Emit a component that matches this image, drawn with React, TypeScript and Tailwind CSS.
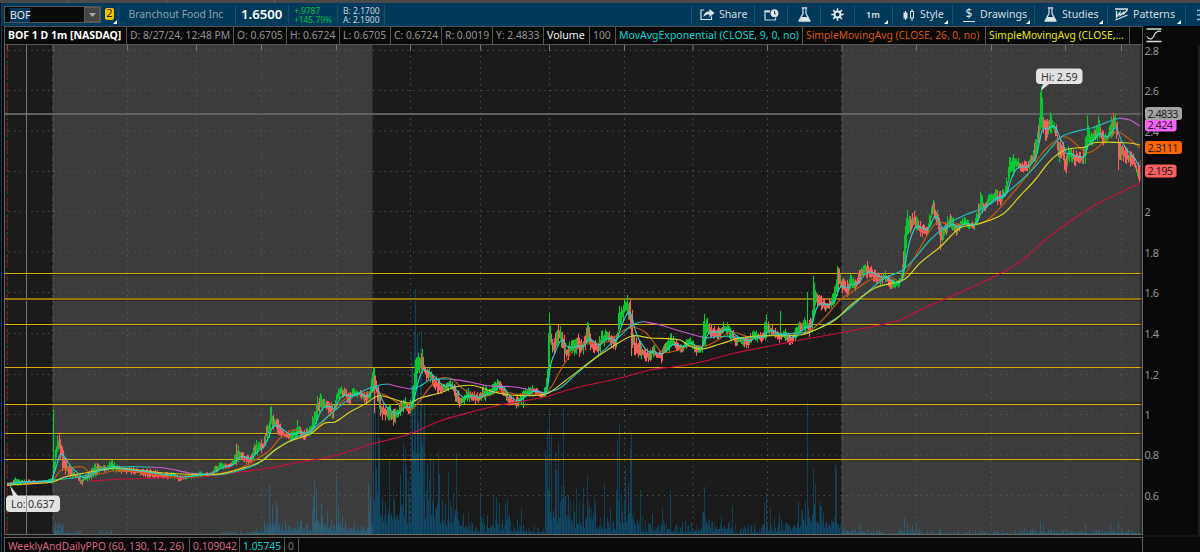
import type { ReactNode } from "react";

type Pt = [number, number];
type Candle = [number, number, number, 0 | 1];

/* x, high, low, direction (1 = up, 0 = down) */
const CANDLES: Candle[] = [
  [7,483,486,0],[12,482,485,0],[16,477,484,1],[20,480,484,1],[30,480,483,0],[40,481,483,0],[52,479,483,1],
  [53,410,482,1],[54,455,478,1],[56,440,463,1],[58,437,450,1],[60,433,455,0],[62,445,467,0],[66,460,473,0],
  [70,466,478,0],[74,472,476,1],[79,476,480,0],[81,478,485,0],[84,476,481,1],[90,471,478,1],[98,461,472,1],
  [101,466,471,1],[106,466,470,1],[111,460,468,1],[116,465,471,1],[120,467,472,0],[140,468,474,0],[152,470,477,0],[165,473,478,0],
  [172,472,477,1],[178,476,480,0],[190,474,478,1],[200,472,476,1],[210,473,475,0],[215,466,473,1],[220,463,468,1],
  [230,464,467,0],[234,456,466,1],[236,446,462,1],[239,448,459,1],[242,453,459,0],[249,457,464,0],[252,452,460,1],[255,442,455,1],
  [259,441,451,1],[263,441,450,0],[266,425,440,1],[269,420,435,1],[270,407,430,1],[272,412,426,1],[274,415,427,0],
  [278,422,435,0],[284,431,437,0],[290,432,440,0],[295,430,437,1],[297,420,436,1],[300,428,436,0],[304,431,438,0],
  [310,427,434,1],[314,410,428,1],[317,399,417,1],[321,394,408,1],[324,400,409,1],[328,400,411,0],[333,407,418,0],
  [336,390,406,1],[340,384,397,1],[345,390,398,0],[349,392,404,0],[353,389,396,1],[358,390,396,1],[362,392,398,0],
  [366,395,403,0],[369,388,401,1],[371,377,391,1],[374,370,388,1],[375,374,390,0],[377,384,402,0],[381,402,417,0],
  [385,406,418,0],[389,406,418,1],[393,411,423,0],[397,409,419,1],[401,402,412,1],[404,397,409,1],[408,404,412,0],
  [411,400,411,1],[413,378,403,1],[415,364,392,1],[416,355,385,1],[419,356,370,1],[422,350,370,1],[424,361,376,0],
  [427,370,380,0],[430,369,380,1],[434,376,386,0],[440,382,395,0],[446,384,390,1],[449,378,389,1],[453,384,393,0],
  [456,389,402,0],[460,395,406,0],[464,394,404,1],[467,389,399,1],[473,392,401,0],[478,394,403,0],[483,387,400,1],
  [490,390,396,1],[494,381,394,1],[498,380,387,1],[502,384,392,0],[505,390,398,0],[508,396,405,0],[515,399,407,0],
  [520,395,404,1],[525,389,396,1],[532,386,393,1],[537,388,394,0],[541,391,400,0],[545,388,396,1],[547,372,391,1],
  [548,340,385,1],[549,313,362,1],[550,316,352,1],[552,338,350,0],[554,340,352,0],[556,330,347,1],[560,325,340,1],
  [563,333,353,0],[566,346,360,0],[571,342,353,1],[575,341,353,1],[577,333,350,1],[580,343,356,0],[584,335,350,1],
  [587,322,341,1],[590,333,347,0],[594,341,351,0],[597,343,354,0],[601,333,348,1],[606,330,341,1],[611,334,345,0],
  [615,338,348,0],[617,328,342,1],[619,304,330,1],[621,309,322,1],[624,301,316,1],[627,297,312,1],[630,302,325,0],
  [632,315,350,0],[634,338,352,0],[640,343,356,0],[645,350,359,0],[649,350,360,0],[653,345,355,1],[657,351,359,0],
  [661,350,361,0],[664,343,354,1],[668,339,350,1],[671,335,347,1],[676,341,348,0],[681,344,354,0],[686,340,347,1],
  [690,337,345,1],[695,345,354,0],[701,344,352,1],[704,315,345,1],[708,320,334,1],[712,327,336,0],[718,328,337,0],
  [723,323,333,1],[728,324,334,1],[734,333,344,0],[740,337,343,1],[747,338,347,0],[754,331,340,1],[762,334,341,0],
  [765,320,337,1],[768,323,333,1],[774,328,337,0],[779,334,341,0],[784,329,338,1],[790,336,344,0],[796,328,338,1],
  [801,320,332,1],[805,319,330,1],[810,320,335,0],[812,308,328,1],[814,280,310,1],[816,288,303,1],[818,292,305,0],
  [822,299,309,0],[828,301,310,0],[833,294,304,1],[836,278,296,1],[838,266,288,1],[840,276,288,0],[846,284,296,0],
  [851,274,288,1],[856,280,289,0],[861,266,281,1],[864,264,273,1],[867,263,276,0],[873,270,279,0],[880,275,284,0],
  [885,272,280,1],[890,279,287,0],[895,282,288,1],[901,275,283,1],[903,240,280,1],[906,215,250,1],[908,213,235,1],
  [911,216,228,0],[915,212,228,1],[919,222,234,0],[926,228,236,0],[930,212,227,1],[932,200,215,1],[936,208,222,0],
  [940,225,246,0],[943,230,240,1],[947,218,230,1],[951,215,226,1],[956,225,236,0],[962,217,227,1],[968,221,227,1],
  [973,223,230,0],[977,211,222,1],[980,194,211,1],[984,202,211,0],[989,195,203,1],[994,190,200,1],[999,193,204,0],
  [1004,190,199,1],[1007,175,197,1],[1009,155,180,1],[1012,156,175,1],[1016,158,167,1],[1021,161,172,0],
  [1026,163,173,0],[1031,156,165,1],[1035,142,160,1],[1038,118,144,1],[1040,100,133,1],[1041,92,130,1],
  [1043,112,130,1],[1045,118,137,0],[1048,123,138,0],[1050,114,130,1],[1053,122,131,1],[1056,126,136,0],
  [1058,135,158,0],[1062,140,160,0],[1064,150,171,0],[1066,158,174,0],[1068,145,160,1],[1071,150,159,1],
  [1075,152,164,0],[1082,154,162,0],[1085,140,160,1],[1087,119,142,1],[1090,132,145,1],[1094,128,142,1],
  [1098,119,137,1],[1102,132,144,0],[1107,136,140,1],[1110,123,137,1],[1112,115,133,1],[1115,116,130,1],
  [1117,120,140,0],[1118,130,169,0],[1119,138,156,0],[1123,146,159,0],[1128,151,163,0],[1134,156,167,0],
  [1137,165,179,0],[1141,162,181,0],
];

/* Isolated long wicks: x, high, low, direction */
const WICKS: Candle[] = [
  [53,410,482,1],[236,445,462,1],[238,446,460,1],[270,407,430,1],[297,420,436,1],[373,368,392,1],[374,376,413,0],[422,349,372,1],
  [523,398,408,1],[549,313,362,1],[564,340,362,0],[587,322,345,1],[631,320,356,0],[704,314,345,1],[707,318,332,1],
  [766,314,338,1],[780,311,338,1],[790,338,345,0],[807,292,325,1],[809,320,337,0],[813,276,310,1],[837,266,292,1],
  [1040,92,130,1],[1087,118,150,1],[1118,138,170,0],[1139,165,182,0],
];

const ORANGE: Pt[] = [[9,485],[52,481],[60,471],[70,468],[83,467],[90,473],[100,474],[112,471],[128,471],[150,474],[176,477],[195,475],[215,474],[235,470],[250,463],[270,450],[280,438],[290,431],[297,430],[307,433],[320,425],[330,414],[340,403],[350,396],[360,394],[372,392],[385,395],[395,401],[410,410],[418,403],[430,387],[440,378.5],[452,379],[462,388],[475,396],[487,396],[500,391],[515,394],[530,394],[545,393],[552,386],[560,371],[572,352],[580,344],[600,343],[612,340],[622,331],[634,327.5],[645,332],[652,340],[662,352],[675,351],[690,346],[705,346],[718,340],[731,332],[750,337],[770,335],[790,334],[805,332],[815,327],[828,314],[840,300],[855,290],[870,280],[890,277],[900,281],[905,275],[920,248],[935,224],[950,224],[978,224],[990,218],[1005,202],[1030,172],[1040,156],[1050,145],[1062,137],[1070,139],[1085,152],[1093,151],[1105,141],[1117,132],[1128,138],[1140,148]];
const YELLOW: Pt[] = [[7,485],[52,482],[65,477],[85,473],[115,468],[130,469],[165,473],[200,474.5],[220,474],[240,469],[262,461],[275,450],[290,441],[310,434],[325,423],[335,422],[350,412],[365,404],[378,396],[390,398],[410,403],[420,398],[440,393],[455,387],[473,385.5],[490,391],[510,395],[546,394],[565,381],[590,362],[612,347],[632,336],[650,338],[680,340],[690,346],[702,349],[720,344],[740,338],[760,336],[800,335],[815,330],[835,320],[850,306],[875,288],[905,279],[920,263],[940,247],[960,228],[978,224],[1003,214],[1020,196],[1035,180],[1050,161],[1065,150],[1085,147],[1095,142.5],[1130,143],[1140,145]];
const RED: Pt[] = [[90,481],[125,479],[160,478],[200,477],[240,472],[270,468],[300,462],[325,458],[350,451],[375,443],[400,437],[415,432],[440,421],[475,411],[500,405],[545,397],[575,388],[620,378],[650,370],[680,366],[705,361],[735,353],[780,344],[800,340],[840,333],[870,327],[900,320],[922,309],[945,299],[985,281],[1020,262],[1045,240],[1065,225],[1090,208],[1115,195],[1140,183]];
const SLOW_UP: Pt[][] = [
  [[9,484],[52,480],[80,477],[95,472],[120,467],[150,467]],
  [[212,475],[225,474],[255,465],[275,450],[295,438],[310,431],[325,419],[345,402],[365,390],[380,385],[388,384]],
  [[411,389],[420,386],[430,380],[440,379],[450,379]],
  [[545,393],[560,388],[575,375],[595,358],[620,336],[632,325],[643,321.5]],
  [[705,338],[725,336.5],[745,338],[780,334],[800,333],[815,330],[835,319],[850,308],[870,290],[885,278],[903,270],[915,258],[930,240],[950,223],[965,215],[985,207],[1010,190],[1030,172],[1045,155],[1060,138],[1070,133],[1095,127],[1110,121],[1120,118]],
];
const SLOW_DOWN: Pt[][] = [
  [[150,467],[165,468],[190,473],[212,475]],
  [[388,384],[400,387],[411,389]],
  [[450,379],[470,382],[490,386],[515,387],[545,393]],
  [[643,321.5],[660,325],[680,331],[705,338]],
  [[1120,118],[1130,120],[1140,126]],
];

/* Volume: from x, to x, low height, high height */
const VOLUME: [number, number, number, number][] = [
  [53,64,4,12],[64,80,1,5],[98,114,0,4],[220,252,0,3],[252,264,2,8],[264,280,8,34],[280,312,4,15],[312,324,10,42],
  [324,346,6,27],[346,368,4,12],[368,373,10,40],[373,380,60,115],[380,398,18,55],[398,411,18,80],[411,424,80,200],
  [424,440,26,75],[440,458,14,56],[458,470,8,30],[470,490,2,22],[490,510,6,36],[510,526,3,16],[526,545,1,11],
  [545,552,20,90],[552,566,16,65],[566,596,10,38],[596,616,5,26],[616,634,18,60],[634,650,3,18],[650,665,3,22],
  [665,702,2,15],[702,712,12,24],[712,732,5,20],[732,762,1,12],[762,790,3,20],[790,802,6,26],[802,822,12,38],
  [822,842,10,24],[842,860,1,7],[860,882,1,5],[882,898,0,2],[898,920,1,9],[920,1020,0,4],[1020,1060,1,6],[1060,1140,1,5],
];
const VOL_SPIKES: Pt[] = [
  [55,12],[58,11],[80,3],[111,4],[269,49],[272,29],[314,54],[316,44],[321,31],[336,58],[338,28],[368,51],[373,140],[375,145],[378,125],
  [389,76],[403,90],[405,85],[412,170],[414,203],[415,245],[417,201],[420,186],[421,203],[424,130],[430,76],
  [433,75],[438,82],[448,62],[456,81],[480,41],[493,37],[496,37],[507,35],[521,26],[545,84],[549,125],[547,104],
  [551,99],[555,82],[558,91],[563,126],[576,46],[583,46],[587,58],[604,50],[617,94],[619,110],[625,65],[630,86],
  [631,100],[640,44],[652,20],[662,26],[670,44],[704,47],[732,28],[764,32],[766,42],[770,27],[779,20],[798,32],
  [805,32],[807,133],[813,65],[815,50],[821,28],[835,70],[836,65],[860,11],[904,16],[907,10],[916,12],
  [940,6],[1040,13],[1043,9],[1085,11],[1110,10],[1118,12],
];

const GRID_X = [7.5,53,127.5,196.5,261.5,336.5,410.5,480.5,549.5,624.5,693,767.5,842,916.5,991.5,1065.5,1121.5];
const GRID_Y = [50.5,90.5,131,171.5,211.5,252,292.5,333.5,374.5,414.5,455,495.5];
const SCALE: [string, number][] = [["2.8",50.5],["2.6",91],["2.4",131.5],["2",212],["1.8",252.5],["1.6",293],["1.4",333.5],["1.2",374.5],["1",414.5],["0.8",455],["0.6",495.5]];

const rnd = (n: number) => {
  const s = Math.sin(n * 127.1 + 11.7) * 43758.5453;
  return s - Math.floor(s);
};

const at = (x: number) => {
  let i = 0;
  while (i < CANDLES.length - 2 && CANDLES[i + 1][0] <= x) i++;
  const a = CANDLES[i];
  const b = CANDLES[i + 1];
  const t = Math.min(1, Math.max(0, (x - a[0]) / (b[0] - a[0])));
  return { hi: a[1] + (b[1] - a[1]) * t, lo: a[2] + (b[2] - a[2]) * t, up: t < 0.5 ? a[3] : b[3] };
};

const bars = { up: "", down: "" };
const fast: Pt[] = [];
let ema = 484;
for (let x = 7; x <= 1140; x++) {
  const { hi, lo, up } = at(x);
  const h = lo - hi;
  const r1 = rnd(x);
  const r2 = rnd(x + 0.4);
  const wick = r1 > 0.7 ? -h * 0.15 : r1 > 0.4 ? h * 0.08 : h * 0.28;
  const tail = r2 > 0.7 ? -h * 0.15 : r2 > 0.4 ? h * 0.08 : h * 0.28;
  const green = rnd(x + 0.7) < 0.12 ? !up : !!up;
  const seg = `M${x + 0.5} ${(hi + wick).toFixed(1)}V${(lo - tail + 0.8).toFixed(1)}`;
  if (green) bars.up += seg;
  else bars.down += seg;
  ema += ((hi + lo) / 2 - ema) * 0.18;
  fast.push([x, ema]);
}
for (const [x, hi, lo, up] of WICKS) {
  const seg = `M${x + 0.5} ${hi}V${lo}`;
  if (up) bars.up += seg;
  else bars.down += seg;
}

const vol = { a: "", b: "" };
for (const [x0, x1, lo, hi] of VOLUME) {
  for (let x = x0; x < x1; x++) {
    const r = rnd(x * 1.3 + 5);
    const h = (lo + (hi - lo) * r * r) * (x % 3 === 2 ? 0.55 : 1);
    if (h < 0.6) continue;
    const seg = `M${x + 0.5} 534V${(534 - h).toFixed(1)}`;
    if (x % 3 === 0) vol.b += seg;
    else vol.a += seg;
  }
}
const spikes = VOL_SPIKES.map(([x, h]) => `M${x + 0.5} 534v${-h}`).join("");

const line = (p: Pt[]) => "M" + p.map(([x, y]) => `${x} ${y.toFixed(1)}`).join("L");

const curve = (p: Pt[]) => {
  let d = `M${p[0][0]} ${p[0][1]}`;
  for (let i = 0; i < p.length - 1; i++) {
    const a = p[Math.max(0, i - 1)];
    const b = p[i];
    const c = p[i + 1];
    const e = p[Math.min(p.length - 1, i + 2)];
    const dx = (c[0] - b[0]) / 3;
    const m1 = (c[1] - a[1]) / (c[0] - a[0]);
    const m2 = (e[1] - b[1]) / (e[0] - b[0]);
    d += `C${(b[0] + dx).toFixed(1)} ${(b[1] + m1 * dx).toFixed(1)} ${(c[0] - dx).toFixed(1)} ${(c[1] - m2 * dx).toFixed(1)} ${c[0]} ${c[1]}`;
  }
  return d;
};

function Chart() {
  return (
    <svg width="1138" height="490" viewBox="4 45 1138 490" className="block shrink-0">
      <rect x="4" y="45" width="1138" height="490" fill="#1b1b1b" />
      <rect x="53" y="45" width="319.5" height="490" fill="#3c3c3c" />
      <rect x="842" y="45" width="300" height="490" fill="#3c3c3c" />
      <g stroke="#5b5b5b" fill="none">
        {GRID_X.map((x) => (
          <g key={x}>
            <path d={`M${x} 50V534`} strokeDasharray="1.2 4.5" />
            <path d={`M${x} 45v5`} stroke="#777" />
          </g>
        ))}
        {GRID_Y.map((y) => (
          <path key={y} d={`M8.5 ${y}H1138`} strokeDasharray="1.2 4.5" />
        ))}
        <path d="M53 45V534M842 45V534" stroke="#505050" strokeDasharray="7 3" />
      </g>
      <path d="M7 45V534" stroke="#7a1212" strokeDasharray="14 5" />
      <g fill="none" stroke="#0f4a67">
        <path d={vol.a} strokeOpacity="0.95" />
        <path d={vol.b} strokeOpacity="0.6" />
        <path d={spikes} strokeOpacity="0.8" />
      </g>
      <clipPath id="lit">
        <path d="M53 45H372.500V535H53ZM842 45H1142V535H842Z" />
      </clipPath>
      <path d={vol.a + vol.b + spikes} fill="none" stroke="#3a6478" strokeOpacity="0.65" clipPath="url(#lit)" />
      <path d="M4 114H1142" stroke="#5f5f5f" strokeWidth="2" />
      <path d="M26.500 45V534" stroke="#727272" />
      <g fill="none">
        <path d="M4 274.500H1142M4 300.500H1142M4 325.500H1142M4 403H1142M4 434.500H1142" stroke="#10101f" strokeOpacity="0.5" />
        <path d="M4 273.500H1142M4 324.500H1142M4 367.500H1142M4 404.500H1142M4 433.500H1142M4 459.500H1142" stroke="#d9ad0c" />
        <path d="M4 299H1142" stroke="#97780f" strokeWidth="2" />
      </g>
      <path d={bars.up} stroke="#08c530" strokeWidth="1.1" fill="none" />
      <path d={bars.down} stroke="#fb5e5e" strokeWidth="1.1" fill="none" />
      <g fill="none" strokeWidth="1.15" strokeLinejoin="round">
        <path d={curve(RED)} stroke="#c81038" />
        <path d={curve(ORANGE)} stroke="#c65a10" />
        {SLOW_DOWN.map((p, i) => (
          <path key={i} d={curve(p)} stroke="#cf58d2" />
        ))}
        {SLOW_UP.map((p, i) => (
          <path key={i} d={curve(p)} stroke="#20bdbd" />
        ))}
        <path d={curve(YELLOW)} stroke="#d8d21c" />
        <path d={line(fast)} stroke="#22d6d2" strokeWidth="1.1" />
      </g>
      <path d="M1141 45V534" stroke="#161616" />
      <g className="font-['Noto_Sans',sans-serif]">
        <path d="M1041 90.500L1043 84h6Z" fill="#e0e0e0" />
        <rect x="1036" y="68.500" width="46.500" height="15.500" rx="4" fill="#e2e2e2" />
        <text x="1041" y="80.500" fontSize="10.6" fill="#333" textLength="36.500">Hi: 2.59</text>
        <path d="M10 485.500L13 496h5Z" fill="#e0e0e0" />
        <rect x="6" y="495.500" width="54" height="16.500" rx="4" fill="#e2e2e2" />
        <path d="M26.500 496v16" stroke="#999" />
        <text x="11" y="508" fontSize="10.600" fill="#333" textLength="43.500">Lo: 0.637</text>
      </g>
      <path d="M4.500 45V534.500H1142" fill="none" stroke="#626767" />
    </svg>
  );
}

function Tag({ x, y, w, fill, children }: { x: number; y: number; w: number; fill: string; children: string }) {
  return (
    <g>
      <rect x={x} y={y - 6.5} width={w} height="13" rx="3" fill={fill} />
      <text x={x + 2.5} y={y + 4} fontSize="10.8" fill="#222" textLength={w - 6}>{children}</text>
    </g>
  );
}

function Axis() {
  return (
    <svg width="58" height="490" viewBox="1142 45 58 490" className="block shrink-0 overflow-visible font-['Noto_Sans',sans-serif]">
      <rect x="1142" y="45" width="58" height="490" fill="#090909" />
      <path d="M1142.500 45V535" stroke="#666" />
      {SCALE.map(([t, y]) => (
        <text key={t} x="1144.500" y={y + 4} fontSize="10.800" fill="#959595" textLength={t.length === 3 ? 14.5 : undefined}>{t}</text>
      ))}
      <Tag x={1145} y={125} w={31.500} fill="#fb62fb">2.424</Tag>
      <Tag x={1145} y={113.500} w={37} fill="#a2a2a2">2.4833</Tag>
      <Tag x={1145} y={147.500} w={37} fill="#fc6500">2.3111</Tag>
      <Tag x={1145} y={171} w={31.500} fill="#fb5e5e">2.195</Tag>
      <path d="M1199 45V535" stroke="#333" />
    </svg>
  );
}

function Cell({ w, className, children }: { w: string; className?: string; children?: ReactNode }) {
  return (
    <div className={`flex shrink-0 items-center overflow-hidden border-r border-[#555] pl-[3px] whitespace-nowrap ${w} ${className ?? ""}`}>
      {children}
    </div>
  );
}

function Tool({ w, corner, children }: { w: string; corner?: boolean; children?: ReactNode }) {
  return (
    <div className={`relative flex h-[19px] shrink-0 items-center border-l border-[#1d4f6d] text-[10.6px] text-[#d8dde0] ${w}`}>
      {children}
      {corner && (
        <svg width="4" height="4" className="absolute right-[4px] bottom-0">
          <path d="M4 0V4H0Z" fill="#fff" />
        </svg>
      )}
    </div>
  );
}

const Flask = () => (
  <svg width="13" height="15" viewBox="0 0 13 15" fill="none" stroke="#dfe3e5" strokeWidth="1.200">
    <path d="M3.800 .8h5.400M5 1v5.500L1 14h11L8 6.500V1" />
    <path d="M3.500 10h6L11.800 14.500H1.200Z" fill="#dfe3e5" stroke="none" />
  </svg>
);

function Toolbar() {
  return (
    <div className="flex h-[23px] items-center bg-[#003a5b] pl-[2px]">
      <div className="flex h-[17px] w-[97px] shrink-0 border border-[#555] bg-[#0a0a0a]">
        <div className="flex flex-1 items-center pl-[5px] text-[10.5px] text-[#e4e4e4]">
          <span className="bg-[#07375a] leading-[14px]">BOF</span>
        </div>
        <div className="flex w-[16px] items-center justify-center border border-[#5a5a5a] bg-[#454545]">
          <svg width="7" height="4"><path d="M0 0H7L3.500 4Z" fill="#a8a8a8" /></svg>
        </div>
      </div>
      <div className="relative ml-[4px] flex h-[18px] w-[12px] shrink-0 items-start">
        <div className="mt-[2px] flex h-[12px] w-[9px] items-center justify-center rounded-[2px] bg-[#f4c400] text-[11px] text-[#222]">2</div>
        <svg width="4" height="4" className="absolute right-[0px] bottom-0"><path d="M4 0V4H0Z" fill="#fff" /></svg>
      </div>
      <div className="ml-[1px] flex h-[19px] w-[117px] shrink-0 items-center border-l border-[#1d4f6d] pl-[9.5px] text-[10.3px] whitespace-nowrap text-[#8fa0aa]">Branchout Food Inc</div>
      <div className="flex h-[19px] w-[53px] shrink-0 items-center border-l border-[#1d4f6d] pl-[5px] text-[13.2px] font-semibold text-white">1.6500</div>
      <div className="flex h-[19px] w-[49px] shrink-0 flex-col justify-center border-l border-[#1d4f6d] pl-[5px] text-[8.4px] leading-[9px] whitespace-nowrap text-[#00bf3a]">
        <span>+.9787</span>
        <span>+145.79%</span>
      </div>
      <div className="flex h-[19px] w-[47px] shrink-0 flex-col justify-center border-l border-[#1d4f6d] pl-[5px] text-[8.5px] leading-[9px] whitespace-nowrap text-[#d0d6da]">
        <span>B: 2.1700</span>
        <span>A: 2.1900</span>
      </div>
      <div className="h-[19px] flex-1 border-l border-[#1d4f6d]" />
      <Tool w="w-[63px]">
        <svg width="15" height="13" viewBox="0 0 15 13" className="mr-[4px] ml-[8px] shrink-0">
          <path d="M4 2H1V11.500H11.500V8.500" fill="none" stroke="#dfe3e5" strokeWidth="1.200" />
          <path d="M3.500 9C4 5 6 3.500 9.500 3.500V1L14.500 5L9.500 9V6.500C7 6.500 5 7 3.500 9Z" fill="#dfe3e5" />
        </svg>
        Share
      </Tool>
      <Tool w="w-[33px]">
        <svg width="15" height="12" viewBox="0 0 15 12" className="ml-[9px]">
          <path d="M6 2H1V11H11.500V8.500" fill="none" stroke="#cdd4d8" strokeWidth="1.200" />
          <path d="M.5 1.500H6V3.500H.5Z" fill="#cdd4d8" />
          <circle cx="10.500" cy="4.200" r="3.900" fill="#dfe3e5" />
          <path d="M10.500 1.800V4.800H12" fill="none" stroke="#003a5b" strokeWidth=".9" />
        </svg>
      </Tool>
      <Tool w="w-[33px]"><span className="ml-[10px]"><Flask /></span></Tool>
      <Tool w="w-[34px]">
        <svg width="13" height="13" viewBox="-6.500 -6.500 13 13" className="ml-[10px]" stroke="#e5e8ea" fill="none">
          <circle r="3" strokeWidth="2" />
          <path d="M0-6.200V-3.500M0 6.200V3.500M-6.200 0H-3.500M6.200 0H3.500M-4.400-4.400L-2.700-2.700M4.400-4.400L2.700-2.700M-4.400 4.400L-2.700 2.700M4.400 4.400L2.700 2.700" strokeWidth="1.500" />
        </svg>
      </Tool>
      <Tool w="w-[38px]" corner><span className="ml-[11px] text-[9px] font-semibold">1m</span></Tool>
      <Tool w="w-[60px]" corner>
        <svg width="12" height="12" viewBox="0 0 12 12" className="mr-[5px] ml-[10px] shrink-0" stroke="#dfe3e5">
          <path d="M2.500 2V11M9 0V12" />
          <rect x="1" y="4" width="3" height="5" fill="#dfe3e5" />
          <rect x="7.500" y="2.500" width="3" height="6.500" fill="#003a5b" />
        </svg>
        Style
      </Tool>
      <Tool w="w-[82px]" corner>
        <span className="mr-[5px] ml-[10px] flex h-[15px] w-[12px] shrink-0 items-center justify-center border-b-[1.5px] border-[#dfe3e5] text-[12px]">$</span>
        Drawings
      </Tool>
      <Tool w="w-[73px]" corner><span className="mr-[5px] ml-[9px] shrink-0"><Flask /></span>Studies</Tool>
      <Tool w="w-[78px]" corner>
        <svg width="13" height="13" viewBox="0 0 13 13" className="mr-[5px] ml-[7px] shrink-0" fill="none" stroke="#dfe3e5" strokeWidth="1.300">
          <path d="M0 1H13M.5 12L12.500 7M1.500 3V9L5 4.500V7.500L8.500 4.500V6L12.500 2" />
        </svg>
        Patterns
      </Tool>
      <Tool w="w-[15px]">
        <svg width="3" height="12" className="ml-[11px]"><path d="M0 1.500H4M0 6H4M0 10.500H4" stroke="#75cbe8" strokeWidth="1.500" /></svg>
      </Tool>
    </div>
  );
}

export default function App() {
  return (
    <div className="flex h-[552px] w-[1200px] flex-col overflow-hidden bg-[#090909] font-['Noto_Sans',sans-serif]">
      <div className="flex h-[3px] shrink-0 bg-[#4a4a4a]">
        <div className="w-[69px] border-r border-[#666]" />
        <div className="w-[98px] border-r border-[#666]" />
        <div className="w-[108px] border-r border-[#666]" />
      </div>
      <div className="flex flex-1">
        <div className="w-[2px] shrink-0 border-r border-[#0c3d5b] bg-[#090909]" />
        <div className="flex w-[1198px] flex-col">
          <Toolbar />
          <div className="flex pl-[2px]">
            <div className="flex h-[19px] w-[1139px] shrink-0 border-y border-l border-[#555] text-[10.3px] text-[#929292]">
              <Cell w="w-[122px]" className="text-[10.5px] font-bold text-white">BOF 1 D 1m [NASDAQ]</Cell>
              <Cell w="w-[107px]">D: 8/27/24, 12:48 PM</Cell>
              <Cell w="w-[53px]">O: 0.6705</Cell>
              <Cell w="w-[53px]">H: 0.6724</Cell>
              <Cell w="w-[51px]">L: 0.6705</Cell>
              <Cell w="w-[51px]">C: 0.6724</Cell>
              <Cell w="w-[51px]">R: 0.0019</Cell>
              <Cell w="w-[51px]">Y: 2.4833</Cell>
              <Cell w="w-[46px]" className="text-[10.6px] text-[#f0f0f0]">Volume</Cell>
              <Cell w="w-[26px]">100</Cell>
              <Cell w="w-[187px]" className="text-[10.5px] text-[#00d4d4]">MovAvgExponential (CLOSE, 9, 0, no)</Cell>
              <Cell w="w-[183px]" className="text-[#d9560a]">SimpleMovingAvg (CLOSE, 26, 0, no)</Cell>
              <Cell w="w-[144px]" className="text-[#e6e600]">SimpleMovingAvg (CLOSE,...</Cell>
              <Cell w="w-[13px]" />
            </div>
            <svg width="30" height="19" viewBox="0 0 30 19" fill="none" stroke="#ddd">
              <path d="M3.500 3H18.500M3.500 15.500H18.500" strokeWidth="1.500" />
              <path d="M4 10.500C7 15 10 12.500 11 9.500S15 4.500 18 5.500" strokeWidth="1.200" />
            </svg>
          </div>
          <div className="flex pl-[2px]">
            <Chart />
            <Axis />
          </div>
          <div className="h-[2px] shrink-0 bg-[#151515]" />
          <div className="flex pl-[2px]">
            <div className="flex h-[20px] w-[1139px] border border-[#606060] text-[10.3px]">
              <Cell w="w-[185px]" className="text-[#d9657f]">WeeklyAndDailyPPO (60, 130, 12, 26)</Cell>
              <Cell w="w-[50px]" className="text-[#d9657f]">0.109042</Cell>
              <Cell w="w-[45px]" className="text-[#00d4d4]">1.05745</Cell>
              <Cell w="w-[14px]" className="text-[#777]">0</Cell>
            </div>
          </div>
        </div>
      </div>
    </div>
  );
}
